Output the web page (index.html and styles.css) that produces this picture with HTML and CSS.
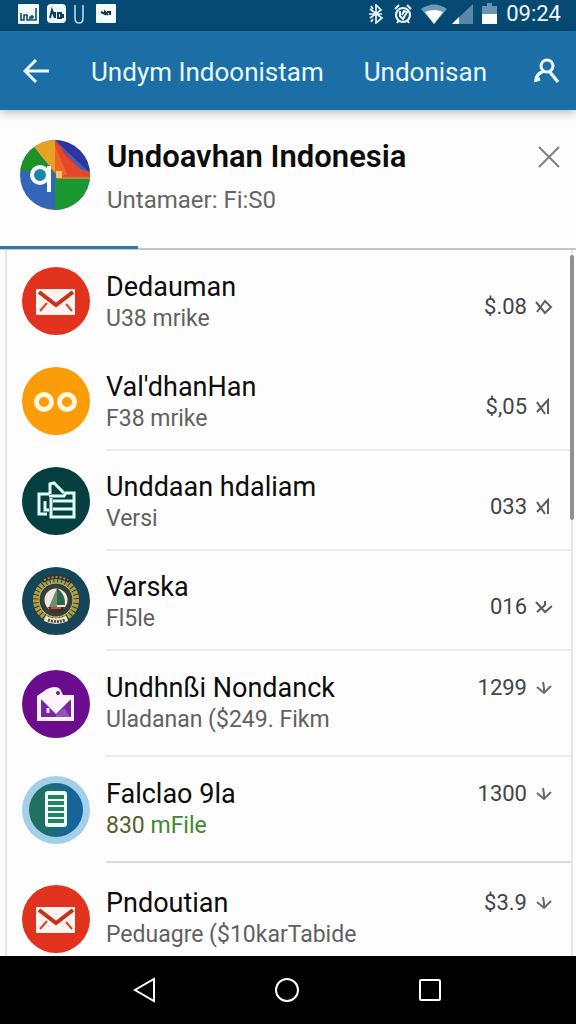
FILE: index.html
```html
<!DOCTYPE html>
<html lang="id">
<head>
    <meta charset="UTF-8">
    <meta name="viewport" content="width=device-width, initial-scale=1.0">
    <title>Undoavhan Indonesia</title>
    <link rel="stylesheet" href="styles.css">
</head>
<body>
    <!-- Shared icons -->
    <svg class="sprite" aria-hidden="true">
        <symbol id="mail" viewBox="0 0 68 68">
            <rect x="14" y="22" width="39" height="26" rx="1" fill="#fff3ee"/>
            <path d="M17 25l17 13 17-13" fill="none" stroke="#c9301c" stroke-width="4"/>
            <path d="M18 44l7-8M50 44l-6-7" fill="none" stroke="#d5442f" stroke-width="2"/>
        </symbol>
        <symbol id="down" viewBox="0 0 18 18">
            <path d="M2 8l7 6 7-7M9 13V9l-1-6" fill="none" stroke="#6a6a6a" stroke-width="2"/>
        </symbol>
        <symbol id="cross-flag" viewBox="0 0 18 18">
            <path d="M2 4l8 12M2 14L13 2v14" fill="none" stroke="#5c5c5c" stroke-width="2"/>
        </symbol>
    </svg>

    <div class="status-bar">
        <div class="status-icons">
            <svg width="21" height="20" viewBox="0 0 21 20">
                <rect width="21" height="20" rx="1" fill="#f2fbff"/>
                <path d="M3 9v7h3v-5h3v5h3v-3h4M18 4v12h-5M14 11v4" fill="none" stroke="#124a6c" stroke-width="1.6"/>
            </svg>
            <svg width="19" height="19" viewBox="0 0 19 19">
                <rect width="19" height="19" rx="4" fill="#f2fbff"/>
                <path d="M3 14l2-8 3 8M8 8v6M11 9h3v5h-3zM16 10v4" fill="none" stroke="#123d58" stroke-width="2"/>
            </svg>
            <svg width="10" height="20" viewBox="0 0 10 20">
                <path d="M1 1v13q0 5 4 5t4-5V1" fill="none" stroke="#b5d7ea" stroke-width="1.6"/>
            </svg>
            <svg class="spaced" width="20" height="19" viewBox="0 0 20 19">
                <rect width="20" height="19" rx="1" fill="#f2fbff"/>
                <path d="M5 8l4 2v-2l3 3M11 8h3v3" fill="none" stroke="#1d3442" stroke-width="2"/>
            </svg>
        </div>
        <div class="status-icons status-right">
            <svg width="16" height="20" viewBox="0 0 16 20">
                <path d="M2 5l12 9-6 5V1l5 5L2 14M1 10h13M3 2l2 3M3 18l2-3" fill="none" stroke="#e6f4fb" stroke-width="1.7"/>
            </svg>
            <svg width="18" height="20" viewBox="0 0 18 20">
                <circle cx="9" cy="11" r="7" fill="none" stroke="#eaf6fc" stroke-width="2.2"/>
                <path d="M1 5l4-4M17 5l-4-4M6 7v5l3 3 4-7-3-1-2 4M3 19l2-3M15 19l-2-3" fill="none" stroke="#eaf6fc" stroke-width="2"/>
            </svg>
            <svg width="26" height="20" viewBox="0 0 26 20">
                <path d="M0 5Q13-4 26 5L13 20z" fill="#6c9ab8"/>
                <path d="M4 8q9-4 18 0l-9 12z" fill="#fff"/>
            </svg>
            <svg width="21" height="20" viewBox="0 0 21 20">
                <path d="M21 0v20H0z" fill="#5a89a8"/>
                <path d="M7 13v7H0z" fill="#fff"/>
            </svg>
            <svg class="battery" width="15" height="21" viewBox="0 0 15 21">
                <path d="M5 0h5v3h5v8H0V3h5z" fill="#6695b2"/>
                <path d="M0 11h15v10H0z" fill="#fff"/>
            </svg>
            <span class="clock">09:24</span>
        </div>
    </div>

    <header class="app-bar">
        <button class="icon-btn" type="button" aria-label="Back">
            <svg width="28" height="28" viewBox="0 0 28 28">
                <path d="M13 3L2 14l11 11M2 14h24" fill="none" stroke="#f0fbff" stroke-width="3"/>
            </svg>
        </button>
        <nav class="tabs">
            <a href="#">Undym Indoonistam</a>
            <a href="#">Undonisan</a>
        </nav>
        <button class="icon-btn" type="button" aria-label="Account">
            <svg width="26" height="26" viewBox="0 0 26 26">
                <circle cx="13" cy="8" r="6" fill="none" stroke="#f0fbff" stroke-width="3"/>
                <path d="M15 13l9 11M10 13c-5 2-8 4-8 9l4-1" fill="none" stroke="#f0fbff" stroke-width="3.4"/>
            </svg>
        </button>
    </header>

    <section class="profile">
        <svg class="profile-logo" viewBox="0 0 70 70">
            <defs>
                <clipPath id="logo-clip"><circle cx="35" cy="35" r="35"/></clipPath>
            </defs>
            <g clip-path="url(#logo-clip)">
                <rect width="70" height="70" fill="#3465b8"/>
                <path d="M35 35L14 7 0 5v26h35z" fill="#1b9128"/>
                <path d="M14 7l21 26V0H14z" fill="#e6a321"/>
                <path d="M35 0h35v33z" fill="#2d35a2"/>
                <path d="M35 0l25 29 10 3v7H40l-5-6z" fill="#e74729"/>
                <path d="M35 0l25 29-14-13z" fill="#b93662"/>
                <path d="M35 6l12 28-9 4-3-5z" fill="#ed652b"/>
                <path d="M35 38h35v32H35z" fill="#1b9731"/>
                <path d="M37 37h33v2H37z" fill="#c78534"/>
                <rect x="36" y="31" width="6" height="7" fill="#f1c377"/>
            </g>
            <circle cx="20" cy="35" r="8" fill="#1786ae" stroke="#f7fcff" stroke-width="4"/>
            <path d="M29 26v26" fill="none" stroke="#f7fcff" stroke-width="4"/>
        </svg>
        <div class="profile-text">
            <h1>Undoavhan Indonesia</h1>
            <p>Untamaer: Fi:S0</p>
        </div>
        <button class="icon-btn close-btn" type="button" aria-label="Close">
            <svg width="22" height="22" viewBox="0 0 22 22">
                <path d="M1 1l20 20M21 1L1 21" stroke="#808080" stroke-width="2"/>
            </svg>
        </button>
        <div class="progress"></div>
    </section>

    <main class="sheet">
        <ul class="list">
            <li class="row">
                <svg class="row-icon red" viewBox="0 0 68 68"><use href="#mail"/></svg>
                <div class="row-body no-line">
                    <div class="row-text">
                        <h2>Dedauman</h2>
                        <p>U38 mrike</p>
                    </div>
                    <span class="amount">$.08</span>
                    <svg class="trend" viewBox="0 0 18 18">
                        <path d="M1 4l9 11 6-6-6-6L2 14" fill="none" stroke="#5c5c5c" stroke-width="2"/>
                    </svg>
                </div>
            </li>
            <li class="row">
                <svg class="row-icon orange" viewBox="0 0 68 68">
                    <circle cx="22" cy="35" r="7.5" fill="none" stroke="#fff8df" stroke-width="5"/>
                    <circle cx="45" cy="35" r="7.5" fill="none" stroke="#fff8df" stroke-width="5"/>
                </svg>
                <div class="row-body">
                    <div class="row-text">
                        <h2>Val'dhanHan</h2>
                        <p>F38 mrike</p>
                    </div>
                    <span class="amount">$,05</span>
                    <svg class="trend" viewBox="0 0 18 18"><use href="#cross-flag"/></svg>
                </div>
            </li>
            <li class="row">
                <svg class="row-icon teal" viewBox="0 0 68 68">
                    <g fill="none" stroke="#e2fff5" stroke-width="3">
                        <path d="M25 47h-8V27h10M28 27V17l4-1 10 10M23 34v9h4"/>
                        <path d="M27 29h15l2-3h8v24H29V31M31 34h21M31 42h21"/>
                    </g>
                </svg>
                <div class="row-body">
                    <div class="row-text">
                        <h2>Unddaan hdaliam</h2>
                        <p>Versi</p>
                    </div>
                    <span class="amount">033</span>
                    <svg class="trend" viewBox="0 0 18 18"><use href="#cross-flag"/></svg>
                </div>
            </li>
            <li class="row">
                <svg class="row-icon navy" viewBox="0 0 68 68">
                    <circle cx="34" cy="33" r="20" fill="none" stroke="#b79b36" stroke-width="6" stroke-dasharray="3 1"/>
                    <circle cx="34" cy="33" r="17" fill="none" stroke="#d9bf55" stroke-width="1"/>
                    <path d="M20 14q14-9 28 0" fill="none" stroke="#2c3837" stroke-width="5"/>
                    <path d="M22 13q12-6 24 0" fill="none" stroke="#a48e4c" stroke-width="2" stroke-dasharray="2 2"/>
                    <circle cx="34" cy="33" r="13" fill="#eee9e2" stroke="#493a2e" stroke-width="3"/>
                    <path d="M35 21l-8 19h8z" fill="#758a70"/>
                    <path d="M35 21q9 7 8 17h-8z" fill="#286847"/>
                    <path d="M26 40h17l-4 6H29z" fill="#4c2b28"/>
                    <path d="M29 41h10" stroke="#d7a94c" stroke-width="1"/>
                    <path d="M24 49q10 5 20 0l2 5q-12 6-24 0z" fill="#eee9d9"/>
                    <path d="M26 53q8 3 17 0" fill="none" stroke="#50504a" stroke-width="3" stroke-dasharray="2 1"/>
                </svg>
                <div class="row-body">
                    <div class="row-text">
                        <h2>Varska</h2>
                        <p>Fl5le</p>
                    </div>
                    <span class="amount">016</span>
                    <svg class="trend" viewBox="0 0 18 18">
                        <path d="M1 4l9 10 7-6M2 14l8-7V3" fill="none" stroke="#5c5c5c" stroke-width="2"/>
                    </svg>
                </div>
            </li>
            <li class="row tall">
                <svg class="row-icon purple" viewBox="0 0 68 68">
                    <path d="M15 26l10-7q9-4 13 0l3 6h11v26H15z" fill="#fff4ff"/>
                    <path d="M19 29l15 15 15-15v18H19z" fill="#7429a2"/>
                    <path d="M19 29l15 12 15-12v-2H19z" fill="#fff4ff"/>
                    <path d="M34 45l8-7 6 9H34z" fill="#9653bd"/>
                    <circle cx="36" cy="23" r="2" fill="#692083"/>
                    <path d="M26 38v5" stroke="#f4ddff" stroke-width="3"/>
                </svg>
                <div class="row-body">
                    <div class="row-text">
                        <h2>Undhnßi Nondanck</h2>
                        <p>Uladanan ($249. Fikm</p>
                    </div>
                    <span class="amount">1299</span>
                    <svg class="trend" viewBox="0 0 18 18"><use href="#down"/></svg>
                </div>
            </li>
            <li class="row tall">
                <svg class="row-icon ringed" viewBox="0 0 68 68">
                    <defs>
                        <linearGradient id="doc-bg">
                            <stop offset="0.2" stop-color="#20705f"/>
                            <stop offset="0.8" stop-color="#17649a"/>
                        </linearGradient>
                    </defs>
                    <circle cx="34" cy="34" r="27" fill="url(#doc-bg)"/>
                    <rect x="23" y="15" width="22" height="36" rx="3" fill="#effff7"/>
                    <path d="M26 21h16M26 27h16M26 33h16M26 39h16M26 45h16" stroke="#258064" stroke-width="4"/>
                </svg>
                <div class="row-body strong-line">
                    <div class="row-text">
                        <h2>Falclao 9la</h2>
                        <p class="file-size"><span>830</span> mFile</p>
                    </div>
                    <span class="amount">1300</span>
                    <svg class="trend" viewBox="0 0 18 18"><use href="#down"/></svg>
                </div>
            </li>
            <li class="row tall">
                <svg class="row-icon red" viewBox="0 0 68 68"><use href="#mail"/></svg>
                <div class="row-body no-line">
                    <div class="row-text">
                        <h2>Pndoutian</h2>
                        <p>Peduagre ($10karTabide</p>
                    </div>
                    <span class="amount">$3.9</span>
                    <svg class="trend" viewBox="0 0 18 18"><use href="#down"/></svg>
                </div>
            </li>
        </ul>
        <div class="scroll-thumb"></div>
    </main>

    <nav class="nav-bar">
        <button class="icon-btn" type="button" aria-label="Back">
            <svg width="26" height="28" viewBox="0 0 26 28">
                <path d="M23 3v22L4 14z" fill="none" stroke="#fff" stroke-width="2"/>
            </svg>
        </button>
        <button class="icon-btn" type="button" aria-label="Home">
            <svg width="26" height="26" viewBox="0 0 26 26">
                <circle cx="13" cy="13" r="11" fill="none" stroke="#fff" stroke-width="2"/>
            </svg>
        </button>
        <button class="icon-btn" type="button" aria-label="Recent apps">
            <svg width="26" height="26" viewBox="0 0 26 26">
                <rect x="3" y="3" width="20" height="20" rx="1" fill="none" stroke="#fff" stroke-width="2"/>
            </svg>
        </button>
    </nav>
</body>
</html>
```
FILE: styles.css
```css
* {
    margin: 0;
    padding: 0;
    box-sizing: border-box;
}

body {
    font-family: Roboto, "Liberation Sans", sans-serif;
    background: #fdfdfd;
    color: #0c0c0c;
    height: 100vh;
    display: flex;
    flex-direction: column;
    overflow: hidden;
}

svg {
    display: block;
    flex: none;
}

.sprite {
    position: absolute;
    width: 0;
    height: 0;
}

.icon-btn {
    background: none;
    border: none;
    cursor: pointer;
}

/* Status bar */
.status-bar {
    flex: none;
    height: 31px;
    padding: 0 15px 4px 18px;
    background: #064a74;
    display: flex;
    align-items: center;
    justify-content: space-between;
}

.status-icons {
    display: flex;
    align-items: center;
    gap: 8px;
}

.status-right {
    gap: 5px;
}

.status-right svg:first-child {
    margin-right: 5px;
}

.status-right svg:nth-child(2) {
    margin-right: 4px;
}

.spaced,
.battery {
    margin-left: 4px;
}

.clock {
    margin-left: 4px;
    color: #eef8fd;
    font-size: 22px;
    line-height: 24px;
}

/* App bar */
.app-bar {
    flex: none;
    height: 79px;
    padding: 0 16px 0 23px;
    background: #1c6ea6;
    display: flex;
    align-items: center;
    z-index: 1;
    box-shadow: 0 2px 10px rgba(0, 0, 0, 0.3);
}

.tabs {
    flex: 1;
    display: flex;
    gap: 40px;
    padding: 2px 0 0 40px;
}

.tabs a {
    color: #eaf8ff;
    font-size: 26px;
    text-decoration: none;
    white-space: nowrap;
}

/* Profile header */
.profile {
    position: relative;
    flex: none;
    height: 140px;
    padding: 24px 16px 0 20px;
    border-bottom: 2px solid #c6c6c8;
    display: flex;
    align-items: flex-start;
}

.profile-logo {
    width: 70px;
    height: 70px;
    margin-top: 6px;
}

.profile-text {
    flex: 1;
    padding-left: 17px;
}

.profile h1 {
    font-size: 31px;
    font-weight: 600;
    line-height: 46px;
}

.profile p {
    color: #666;
    font-size: 24px;
    line-height: 40px;
}

.close-btn {
    margin-top: 12px;
}

.progress {
    position: absolute;
    left: 0;
    bottom: -1px;
    width: 24%;
    height: 3px;
    background: #2f78a8;
}

/* List */
.sheet {
    position: relative;
    flex: 1;
    min-height: 0;
    margin: 0 3px 0 5px;
    border: 2px solid #e6e6e8;
    border-width: 0 2px;
}

.list {
    height: 100%;
    padding-top: 1px;
    list-style: none;
    overflow: hidden;
}

.row {
    display: flex;
    align-items: center;
    height: 100px;
    padding-left: 15px;
}

.row.tall {
    height: 106px;
}

.row.tall:last-child {
    height: 112px;
}

.row-icon {
    width: 68px;
    height: 68px;
    border-radius: 50%;
}

.red { background: #e0321d; }
.orange { background: #fa9d08; }
.teal { background: #063f3f; }
.navy { background: #16455a; }
.purple { background: #6b0c8f; }
.ringed { background: #a4cfe9; }

.row-body {
    flex: 1;
    align-self: stretch;
    display: flex;
    align-items: center;
    margin-left: 16px;
    padding-right: 18px;
    border-bottom: 2px solid #ebebed;
}

.row-body.no-line {
    border-color: transparent;
}

.row-body.strong-line {
    border-color: #dcdadb;
}

.row-text {
    flex: 1;
    padding-top: 4px;
}

.row h2 {
    font-size: 27px;
    font-weight: 400;
    line-height: 34px;
    white-space: nowrap;
}

.row p {
    color: #616161;
    font-size: 23px;
    line-height: 30px;
    white-space: nowrap;
}

.row .file-size {
    color: #3c8a2d;
}

.file-size span {
    color: #59602f;
}

.amount {
    color: #444;
    font-size: 22px;
    line-height: 34px;
    padding-top: 14px;
}

.trend {
    width: 18px;
    height: 18px;
    margin: 14px 0 0 8px;
}

/* Amount lines up with the title on tall rows */
.tall .row-text {
    padding-top: 0;
}

.tall .amount,
.tall .trend {
    padding: 0;
    margin-top: 0;
    margin-bottom: 30px;
}

.scroll-thumb {
    position: absolute;
    top: 5px;
    right: -3px;
    width: 4px;
    height: 265px;
    border-radius: 2px;
    background: #929294;
}

/* System navigation */
.nav-bar {
    flex: none;
    height: 68px;
    padding: 0 75px 0 73px;
    background: #000;
    display: flex;
    align-items: center;
    justify-content: space-around;
}
```
